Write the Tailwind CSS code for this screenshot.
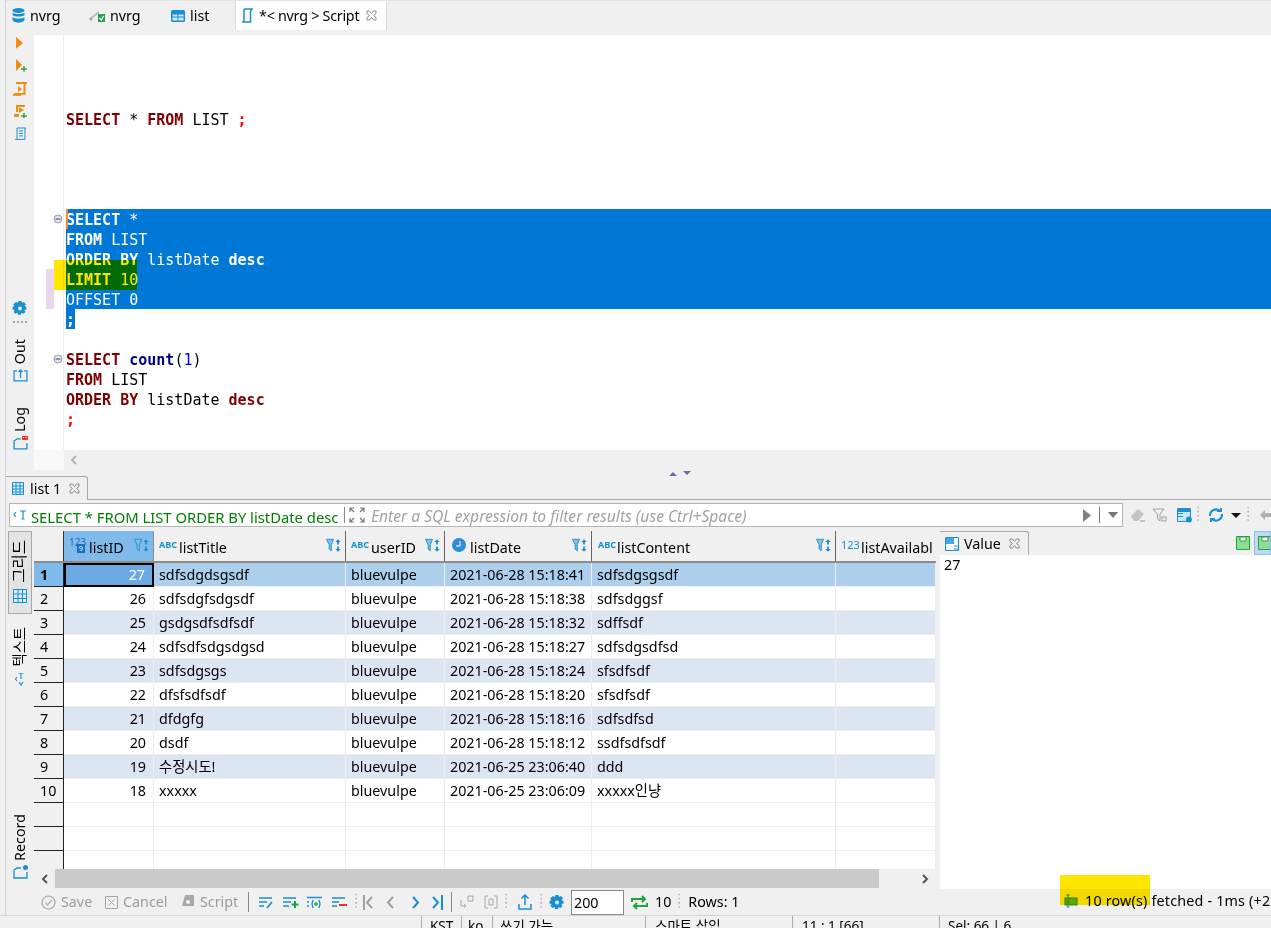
<!DOCTYPE html>
<html lang="ko">
<head>
<meta charset="UTF-8" />
<title>nvrg Script</title>
<script src="https://cdn.jsdelivr.net/npm/@tailwindcss/browser@4"></script>
</head>
<body class="m-0 overflow-hidden bg-[#f0f0f0]">

<svg class="hidden">
  <symbol id="sortf" viewBox="0 0 18 16">
    <path d="M.5 1h8L6 7v7L3.500 12V7z" fill="#7fc0e8" stroke="#1a8fd0" stroke-width="1"/>
    <path d="M13.500 1l3 3h-2v3h-2V4h-2zM13.500 15l3-3h-2V9h-2v3h-2z" fill="#1a8fd0"/>
  </symbol>
  <symbol id="dots" viewBox="0 0 3 24">
    <path d="M0 2h2v2H0zM0 7h2v2H0zM0 12h2v2H0zM0 17h2v2H0z" fill="#b5b0a5"/>
  </symbol>
</svg>

<div class="relative w-[1271px] h-[928px] overflow-hidden bg-[#f0f0f0] text-black font-['Noto_Sans','Noto_Sans_CJK_KR',sans-serif] text-[14.3px]">
  <div class="ml-[5px] border-l border-[#d4d4d4] h-[915px] flex flex-col">

    <!-- tabs -->
    <div class="h-[30px] flex items-stretch shrink-0 border-t border-[#e2e2e2]">
      <div class="w-[77px] flex items-center pl-[6px] gap-[5px]">
        <svg width="13" height="15" viewBox="0 0 13 15"><ellipse cx="6.500" cy="2.500" rx="6" ry="2.500" fill="#1a8fd0"/><path d="M.5 4.500c2 2 10 2 12 0v2.500c-2 2-10 2-12 0zM.5 9c2 2 10 2 12 0v3c-2 3.500-10 3.500-12 0z" fill="#1a8fd0"/></svg>
        <span>nvrg</span>
      </div>
      <div class="w-[75px] flex items-center pl-[6px] gap-[4px]">
        <svg width="17" height="16" viewBox="0 0 17 16"><path d="M1 11l9-7" stroke="#b8bcc8" stroke-width="2"/><circle cx="2" cy="11" r="1.500" fill="#9aa0b0"/><rect x="9" y="6" width="7" height="8" fill="#2aa050"/><path d="M10.500 10l2 2 2-4" stroke="#fff" fill="none" stroke-width="1.200"/></svg>
        <span>nvrg</span>
      </div>
      <div class="w-[77px] flex items-center pl-[13px] gap-[5px]">
        <svg width="14" height="12" viewBox="0 0 14 12"><rect width="14" height="12" rx="1.500" fill="#1a8fd0"/><path d="M1.500 4.500h5v2h-5zM7.500 4.500h5v2h-5zM1.500 7.500h5v3h-5zM7.500 7.500h5v3h-5z" fill="#cfe8f7"/></svg>
        <span>list</span>
      </div>
      <div class="w-[152px] bg-white border-x border-[#dcdcdc] flex items-center pl-[5px] gap-[6px]">
        <svg width="12" height="16" viewBox="0 0 12 16" fill="none" stroke="#1a8fd0" stroke-width="1.500"><path d="M3 1h8L9.500 3v11H1"/><path d="M3 1v13"/></svg>
        <span class="tracking-[-0.25px]">*&lt; nvrg &gt; Script</span>
        <svg class="ml-[1px]" width="11" height="11" viewBox="0 0 11 11" fill="none" stroke="#8a8a8a"><path d="M1 1h2.500L5.500 3.500 7.500 1H10v2.500L7.500 5.500 10 7.500V10H7.500L5.500 7.500 3.500 10H1V7.500L3.500 5.500 1 3.500z"/></svg>
      </div>
    </div>
    <div class="h-[5px] shrink-0"></div>

    <!-- editor -->
    <div class="h-[415px] flex shrink-0">
      <div class="w-[28px] shrink-0 flex flex-col items-center">
        <svg class="mt-[1px]" width="10" height="14" viewBox="0 0 10 14"><path d="M1 1l7 6-7 6z" fill="#f08a12"/></svg>
        <svg class="mt-[9px] ml-[3px]" width="13" height="14" viewBox="0 0 13 14"><path d="M1 0l6 6-6 6z" fill="#f08a12"/><path d="M9 7v6M6 10h6" stroke="#3aa040" stroke-width="1.500"/></svg>
        <svg class="mt-[9px]" width="14" height="14" viewBox="0 0 14 14"><path d="M3 1h10L11.500 3v9H1" fill="none" stroke="#f08a12" stroke-width="2"/><path d="M5 4l4 3-4 3z" fill="#f08a12"/><path d="M0 12h8v2H0z" fill="#f08a12"/></svg>
        <svg class="mt-[9px] ml-[1px]" width="14" height="14" viewBox="0 0 14 14"><path d="M3 7V1h8" fill="none" stroke="#f08a12" stroke-width="2"/><path d="M5 2l5 3-5 3z" fill="#f08a12"/><path d="M0 9h5v3H0z" fill="#f08a12"/><path d="M10 8v6M7 11h6" stroke="#3aa040" stroke-width="1.500"/></svg>
        <svg class="mt-[9px]" width="13" height="15" viewBox="0 0 13 15" fill="none" stroke="#1a8fd0"><path d="M3 1h9l-1 1v10.500H1"/><path d="M3 1v11.500M5 4h4M5 6.500h4M5 9h4"/></svg>
        <svg class="mt-[158px]" width="16" height="16" viewBox="0 0 16 16"><path d="M6.500 1h3l.5 2 2-1 2 2.500-1.500 1.500 2 1v2.500l-2 .5 1 2-2 2-2-1-.5 2h-3l-.5-2-2 1-2-2 1-2-2-.5V7l2-1-1.500-1.500L4 2l2 1z" fill="#1a8fd0"/><circle cx="8" cy="8.500" r="2" fill="#d8eefa"/></svg>
        <svg class="mt-[5px]" width="14" height="2" viewBox="0 0 14 2"><path d="M0 0h2v2H0zM4 0h2v2H4zM8 0h2v2H8zM12 0h2v2h-2z" fill="#a8a8a8"/></svg>
        <span class="mt-[16px] [writing-mode:vertical-rl] rotate-180 leading-none">Out</span>
        <svg class="mt-[5px]" width="15" height="13" viewBox="0 0 15 13" fill="none" stroke="#1a8fd0" stroke-width="1.300"><path d="M4 2H1v10h13V2h-3M7.500 9V1M5.500 3l2-2 2 2"/></svg>
        <span class="mt-[25px] [writing-mode:vertical-rl] rotate-180 leading-none">Log</span>
        <svg class="mt-[4px]" width="15" height="14" viewBox="0 0 15 14"><path d="M8 3H4L1 5v8h13V7" fill="none" stroke="#1a8fd0" stroke-width="1.300"/><rect x="9" y="0" width="6" height="4" fill="#e8352b"/><path d="M10 1.500h1M12.500 1.500h1" stroke="#fff"/></svg>
      </div>
      <div class="relative w-[30px] shrink-0 bg-white border-r border-[#eeeeee]">
        <svg class="absolute left-[19px] top-[179px]" width="10" height="10" viewBox="0 0 10 10"><circle cx="5" cy="5" r="4" fill="#dfe3ea" stroke="#9aa3b5"/><path d="M2.500 5h5" stroke="#445"/></svg>
        <svg class="absolute left-[19px] top-[319px]" width="10" height="10" viewBox="0 0 10 10"><circle cx="5" cy="5" r="4" fill="#dfe3ea" stroke="#9aa3b5"/><path d="M2.500 5h5" stroke="#445"/></svg>
      </div>
      <div class="flex-1 bg-white pt-[14px] font-['DejaVu_Sans_Mono',monospace] text-[15px] leading-[22px]">
        <div class="h-[60px]"></div>
        <div class="h-5 pl-[2px]"><b class="text-[#7f0000]">SELECT</b> * <b class="text-[#7f0000]">FROM</b> LIST <b class="text-[#ff0000]">;</b></div>
        <div class="h-[80px]"></div>
        <div class="ml-[2px] bg-[#0078d7] text-white relative">
          <span class="absolute left-0 top-0 w-[2px] h-5 bg-[#f08a30]"></span>
          <div class="h-5"><b>SELECT</b> *</div>
          <div class="h-5"><b>FROM</b> LIST</div>
          <div class="h-5"><b>ORDER BY</b> listDate <b>desc</b></div>
          <div class="h-5"><b>LIMIT</b> 10</div>
          <div class="h-5">OFFSET 0</div>
        </div>
        <div class="ml-[2px] w-[9px] h-5 bg-[#0078d7] text-white"><b>;</b></div>
        <div class="h-5"></div>
        <div class="h-5 pl-[2px]"><b class="text-[#7f0000]">SELECT</b> <b class="text-[#00007f]">count</b>(<span class="text-[#0000ff]">1</span>)</div>
        <div class="h-5 pl-[2px]"><b class="text-[#7f0000]">FROM</b> LIST</div>
        <div class="h-5 pl-[2px]"><b class="text-[#7f0000]">ORDER BY</b> listDate <b class="text-[#7f0000]">desc</b></div>
        <div class="h-5 pl-[2px]"><b class="text-[#ff0000]">;</b></div>
      </div>
    </div>

    <!-- editor scrollbar -->
    <div class="h-[20px] shrink-0 flex">
      <div class="w-[28px]"></div>
      <div class="w-[30px] bg-[#f8f8f8]"></div>
      <div class="flex-1 pl-[6px] flex items-center">
        <svg width="8" height="10" viewBox="0 0 8 10" fill="none" stroke="#b5b5b5" stroke-width="2"><path d="M6 1L2 5l4 4"/></svg>
      </div>
    </div>

    <!-- sash -->
    <div class="h-[6px] shrink-0 relative">
      <svg class="absolute left-[663px] top-0" width="23" height="6" viewBox="0 0 23 6"><path d="M0 6l4-4 4 4zM14 1h8l-4 4z" fill="#6a6aa8"/></svg>
    </div>

    <!-- result tabs -->
    <div class="h-[24px] shrink-0 border-b border-[#a8a8a8] flex">
      <div class="w-[82px] h-[24px] border-t border-r border-[#a8a8a8] rounded-tr-[3px] bg-[#f0f0f0] flex items-center pl-[6px] gap-[6px]">
        <svg width="12" height="13" viewBox="0 0 12 13"><path d="M.5.500h11v12H.5zM.5 4h11M.5 7h11M.5 10h11M4 .5v12M8 .5v12" fill="#d5ecf9" stroke="#1a8fd0"/></svg>
        <span>list 1</span>
        <svg class="ml-[2px]" width="11" height="11" viewBox="0 0 11 11" fill="none" stroke="#8a8a8a"><path d="M1 1h2.500L5.500 3.500 7.500 1H10v2.500L7.500 5.500 10 7.500V10H7.500L5.500 7.500 3.500 10H1V7.500L3.500 5.500 1 3.500z"/></svg>
      </div>
    </div>

    <!-- filter row -->
    <div class="h-[24px] mt-[3px] shrink-0 flex items-center">
      <div class="ml-[3px] w-[1118px] h-[24px] bg-white border border-[#b5b5b5] flex items-center">
        <svg class="ml-[3px] shrink-0" width="14" height="10" viewBox="0 0 14 10" fill="none" stroke="#1a8fd0" stroke-width="1.200"><path d="M3 2L1 4.500 3 7M7 1h6M10 1v8M8.500 9h3"/></svg>
        <span class="ml-[4px] mt-[4px] text-[14.8px] text-[#008000] whitespace-nowrap w-[313px] shrink-0 overflow-hidden">SELECT * FROM LIST ORDER BY listDate desc</span>
        <span class="w-px h-[16px] bg-[#8a8a8a] shrink-0"></span>
        <svg class="ml-[4px] shrink-0" width="16" height="16" viewBox="0 0 16 16" fill="none" stroke="#777" stroke-width="1.200"><path d="M1 5V1h4M1 1l4 4M11 1h4v4M15 1l-4 4M1 11v4h4M1 15l4-4M15 11v4h-4M15 15l-4-4"/></svg>
        <span class="ml-[6px] mt-[4px] text-[15.6px] italic text-[#a3a3a3] whitespace-nowrap">Enter a SQL expression to filter results (use Ctrl+Space)</span>
        <div class="ml-auto flex items-center">
          <svg width="10" height="13" viewBox="0 0 10 13"><path d="M1 0l8 6.500-8 6.500z" fill="#808080"/></svg>
          <span class="ml-[7px] w-px h-[16px] bg-[#777]"></span>
          <svg class="ml-[8px] mr-[4px]" width="10" height="6" viewBox="0 0 10 6"><path d="M0 0h10L5 6z" fill="#777"/></svg>
        </div>
      </div>
      <svg class="ml-[7px]" width="16" height="14" viewBox="0 0 16 14"><path d="M1 8l7-7 6 5-6 7H4z" fill="#c4c4c4"/><path d="M10 13h5" stroke="#999"/></svg>
      <svg class="ml-[6px]" width="16" height="15" viewBox="0 0 16 15" fill="none" stroke="#a0a0a0"><path d="M1 1h11L8 6v7L5.500 11V6z"/><rect x="10" y="9" width="4" height="4"/></svg>
      <svg class="ml-[9px]" width="16" height="15" viewBox="0 0 16 15"><path d="M.5.500h13v13H.5z" fill="#cfe6f5" stroke="#1a8fd0"/><path d="M.5 1h13v3H.5zM1 5h5v1H1zM1 8h5v1H1z" fill="#1a8fd0"/><circle cx="12" cy="11.500" r="3" fill="#1a8fd0"/></svg>
      <svg class="ml-[4px]" width="3" height="20" viewBox="0 0 3 24"><use href="#dots"/></svg>
      <svg class="ml-[8px]" width="16" height="16" viewBox="0 0 16 16" fill="none" stroke="#1a8fd0" stroke-width="2"><path d="M2 9a6 6 0 0 1 10-5M14 7a6 6 0 0 1-10 5M9 4h4V1M7 12H3v3"/></svg>
      <svg class="ml-[7px]" width="10" height="5" viewBox="0 0 10 5"><path d="M0 0h10L5 5z" fill="#111"/></svg>
      <svg class="ml-[6px]" width="3" height="20" viewBox="0 0 3 24"><use href="#dots"/></svg>
      <svg class="ml-[9px]" width="12" height="12" viewBox="0 0 12 12"><path d="M6 1L1 6l5 5V8h6V4H6z" fill="#b0b0b0"/></svg>
    </div>

    <!-- results -->
    <div class="h-[358px] mt-[4px] shrink-0 flex">
      <div class="w-[28px] shrink-0 pl-[2px] flex flex-col">
        <div class="w-6 h-[83px] bg-[#e3e3e3] border border-[#a8a8a8] flex flex-col items-center pt-[8px]">
          <span class="[writing-mode:vertical-rl] [text-orientation:sideways] rotate-180 leading-none text-[15.5px]">그리드</span>
          <svg class="mt-[6px]" width="14" height="14" viewBox="0 0 14 14"><path d="M.5.500h13v13H.5zM.5 5h13M.5 9.500h13M5 .5v13M9.500.5v13" fill="#d5ecf9" stroke="#1a8fd0"/></svg>
        </div>
        <div class="w-6 mt-[13px] flex flex-col items-center">
          <span class="[writing-mode:vertical-rl] [text-orientation:sideways] rotate-180 leading-none">텍스트</span>
          <svg class="mt-[7px]" width="10" height="13" viewBox="0 0 10 13" fill="none" stroke="#1a8fd0" stroke-width="1.200"><path d="M3 0h6M6 0v6M2 4L.5 6 2 8M4 9l2 3 2-3"/></svg>
        </div>
        <div class="w-6 mt-auto mb-[10px] flex flex-col items-center">
          <span class="[writing-mode:vertical-rl] rotate-180 leading-none">Record</span>
          <svg class="mt-[4px]" width="15" height="14" viewBox="0 0 15 14"><path d="M8 3H4L1 5v8h13V7" fill="none" stroke="#1a8fd0" stroke-width="1.300"/><circle cx="12.500" cy="2.500" r="2.500" fill="#1a8fd0"/></svg>
        </div>
      </div>

      <div class="w-[902px] shrink-0 flex flex-col">
        <div class="h-[338px] overflow-hidden bg-white" id="grid">
          <div class="h-[32px] grid grid-cols-[30px_90px_192px_99px_147px_244px_100px] bg-[#f0f0f0] border-b-2 border-[#8c8c8c]">
            <div class="border-r border-[#333]"></div>
            <div class="bg-[#80baeb] border-r border-[#8c8c8c] flex items-center pl-[5px]">
              <span class="relative w-[20px] h-[16px] text-[#1a70c0] text-[10px] leading-[10px] -mt-[3px] shrink-0">123<i class="absolute left-[8px] top-[7px] w-[8px] h-[9px] bg-[#1a70c0] text-white text-[7px] not-italic leading-[9px] text-center">9</i></span>
              <span class="mt-[4px]">listID</span>
              <svg class="ml-auto mr-[3px] -mt-[2px]" width="16" height="15"><use href="#sortf"/></svg>
            </div>
            <div class="border-r border-[#666] flex items-center pl-[5px]">
              <span class="w-[20px] text-[#1a8fd0] text-[9px] font-bold leading-none -mt-[4px] shrink-0">ABC</span>
              <span class="mt-[4px]">listTitle</span>
              <svg class="ml-auto mr-[3px] -mt-[2px]" width="16" height="15"><use href="#sortf"/></svg>
            </div>
            <div class="border-r border-[#666] flex items-center pl-[5px]">
              <span class="w-[20px] text-[#1a8fd0] text-[9px] font-bold leading-none -mt-[4px] shrink-0">ABC</span>
              <span class="mt-[4px]">userID</span>
              <svg class="ml-auto mr-[3px] -mt-[2px]" width="16" height="15"><use href="#sortf"/></svg>
            </div>
            <div class="border-r border-[#666] flex items-center pl-[7px]">
              <svg class="-mt-[3px] shrink-0" width="14" height="14" viewBox="0 0 14 14"><circle cx="7" cy="7" r="7" fill="#2c8ed6"/><path d="M8 3v5H4" stroke="#fff" fill="none"/></svg>
              <span class="ml-[4px] mt-[4px]">listDate</span>
              <svg class="ml-auto mr-[3px] -mt-[2px]" width="16" height="15"><use href="#sortf"/></svg>
            </div>
            <div class="border-r border-[#666] flex items-center pl-[6px]">
              <span class="w-[19px] text-[#1a8fd0] text-[9px] font-bold leading-none -mt-[4px] shrink-0">ABC</span>
              <span class="mt-[4px]">listContent</span>
              <svg class="ml-auto mr-[3px] -mt-[2px]" width="16" height="15"><use href="#sortf"/></svg>
            </div>
            <div class="flex items-center pl-[5px] overflow-hidden whitespace-nowrap">
              <span class="w-[20px] text-[#1a8fd0] text-[11px] leading-none -mt-[4px] shrink-0">123</span>
              <span class="mt-[4px]">listAvailabl</span>
            </div>
          </div>
          <div id="rows"></div>
        </div>
        <div class="h-[19px] flex items-center bg-[#f0f0f0]">
          <div class="w-[21px] flex justify-center"><svg width="8" height="10" viewBox="0 0 8 10" fill="none" stroke="#555" stroke-width="2"><path d="M6 1L2 5l4 4"/></svg></div>
          <div class="w-[824px] h-[19px] bg-[#cacaca]"></div>
          <div class="w-[57px] pl-[42px]"><svg width="8" height="10" viewBox="0 0 8 10" fill="none" stroke="#555" stroke-width="2"><path d="M2 1l4 4-4 4"/></svg></div>
        </div>
      </div>

      <div class="ml-[4px] flex-1 flex flex-col">
        <div class="h-[24px] flex items-stretch">
          <div class="w-[89px] border-t border-r border-[#a8a8a8] rounded-tr-[3px] flex items-center pl-[5px] gap-[5px]">
            <svg width="14" height="14" viewBox="0 0 14 14"><path d="M.5.500h13v13H.5z" fill="#fff" stroke="#1a8fd0"/><path d="M1 1h8v6H1z" fill="#3fa9e0"/><path d="M9 9h4M9 12h4" stroke="#1a8fd0"/></svg>
            <span>Value</span>
            <svg class="ml-[3px]" width="11" height="11" viewBox="0 0 11 11" fill="none" stroke="#8a8a8a"><path d="M1 1h2.500L5.500 3.500 7.500 1H10v2.500L7.500 5.500 10 7.500V10H7.500L5.500 7.500 3.500 10H1V7.500L3.500 5.500 1 3.500z"/></svg>
          </div>
          <div class="ml-auto flex items-center">
            <svg width="14" height="14" viewBox="0 0 14 14"><path d="M.5.500h13v13H.5z" fill="#8fdc9a" stroke="#1aa83a"/><path d="M4 1h6v4H4z" fill="#fff" stroke="#1aa83a"/></svg>
            <div class="ml-[4px] w-[17px] h-[24px] bg-[#bcdcf5] border border-[#8fc0ea] pl-[3px] pt-[4px] overflow-hidden">
              <svg width="14" height="14" viewBox="0 0 14 14"><path d="M.5.500h13v13H.5z" fill="#8fdc9a" stroke="#3a9a40"/><path d="M4 1h6v4H4z" fill="#fff" stroke="#3a9a40"/></svg>
            </div>
          </div>
        </div>
        <div class="h-[334px] bg-white pl-[4px] leading-[20px]">27</div>
      </div>
    </div>

    <!-- toolbar -->
    <div class="h-[26px] shrink-0 flex items-center text-[#9c9c9c]">
      <svg class="ml-[35px]" width="15" height="15" viewBox="0 0 15 15" fill="none" stroke="#a8a8a8" stroke-width="1.200"><circle cx="7.500" cy="7.500" r="6.500"/><path d="M4.500 7.500l2 2.500 4-5"/></svg>
      <span class="ml-[5px] w-[42px]">Save</span>
      <svg class="ml-[2px]" width="13" height="13" viewBox="0 0 13 13" fill="none" stroke="#a8a8a8"><path d="M.5.500h12v12H.5zM3.500 3.500l6 6M9.500 3.500l-6 6"/></svg>
      <span class="ml-[5px] w-[52px]">Cancel</span>
      <svg class="ml-[7px]" width="12" height="14" viewBox="0 0 12 14"><path d="M3 0h9v11H0z" fill="#a8a8a8"/><circle cx="6" cy="7" r="2" fill="#f0f0f0"/></svg>
      <span class="ml-[6px] w-[39px]">Script</span>
      <span class="ml-[9px] w-px h-[20px] bg-[#888]"></span>
      <svg class="ml-[10px]" width="15" height="13" viewBox="0 0 15 13" fill="none" stroke="#1a8fd0" stroke-width="1.700"><path d="M0 2h13M0 6h8M0 10h5M13 6l-5 6"/></svg>
      <svg class="ml-[9px]" width="16" height="13" viewBox="0 0 16 13" stroke-width="1.700" fill="none"><path d="M0 2h13M0 6h8M0 10h6" stroke="#1a8fd0"/><path d="M12 5v7M8.500 8.500h7" stroke="#1aa83a" stroke-width="2"/></svg>
      <svg class="ml-[8px]" width="15" height="13" viewBox="0 0 15 13" fill="none" stroke="#1a8fd0" stroke-width="1.300"><path d="M0 1.500h15M2 6H0M2 10H0M6 4L5 8l1 4M12 4l1 4-1 4"/><path d="M9 6v4M7 8h4" stroke="#1aa83a"/></svg>
      <svg class="ml-[10px]" width="15" height="13" viewBox="0 0 15 13" stroke-width="1.700" fill="none"><path d="M0 2h13M0 6h7M0 10h5" stroke="#1a8fd0"/><path d="M7 9h8" stroke="#e8352b" stroke-width="2"/></svg>
      <svg class="ml-[8px]" width="3" height="20" viewBox="0 0 3 24"><use href="#dots"/></svg>
      <svg class="ml-[4px]" width="12" height="15" viewBox="0 0 12 15" fill="none" stroke="#a0a0a0" stroke-width="2"><path d="M2 0v15M10 2L5 7.500l5 5.500"/></svg>
      <svg class="ml-[12px]" width="8" height="15" viewBox="0 0 8 15" fill="none" stroke="#a0a0a0" stroke-width="2"><path d="M7 2L2 7.500 7 13"/></svg>
      <svg class="ml-[18px]" width="8" height="15" viewBox="0 0 8 15" fill="none" stroke="#1a8fd0" stroke-width="2"><path d="M1 2l5 5.500L1 13"/></svg>
      <svg class="ml-[11px]" width="13" height="15" viewBox="0 0 13 15" fill="none" stroke="#1a8fd0" stroke-width="2"><path d="M11 0v15M2 2l5 5.500L2 13"/></svg>
      <span class="ml-[7px] w-px h-[20px] bg-[#888]"></span>
      <svg class="ml-[8px]" width="14" height="14" viewBox="0 0 14 14" fill="none" stroke="#a8a8a8"><path d="M1 5v6h5M4 9l2 2-2 2M8 1h5v5H8z"/></svg>
      <svg class="ml-[10px]" width="14" height="14" viewBox="0 0 14 14" fill="none" stroke="#a8a8a8"><path d="M4 1H1v12h3M10 1h3v12h-3M5 4h4v6H5z"/></svg>
      <svg class="ml-[7px]" width="3" height="20" viewBox="0 0 3 24"><use href="#dots"/></svg>
      <svg class="ml-[10px]" width="14" height="16" viewBox="0 0 14 16" fill="none" stroke="#1a8fd0" stroke-width="1.500"><path d="M7 11V1M3.500 4.500L7 1l3.500 3.500M1 10v5h12v-5"/></svg>
      <svg class="ml-[8px]" width="3" height="20" viewBox="0 0 3 24"><use href="#dots"/></svg>
      <svg class="ml-[6px]" width="16" height="16" viewBox="0 0 16 16"><path d="M6.500 1h3l.5 2 2-1 2 2.500-1.500 1.500 2 1v2.500l-2 .5 1 2-2 2-2-1-.5 2h-3l-.5-2-2 1-2-2 1-2-2-.5V7l2-1-1.500-1.500L4 2l2 1z" fill="#1a8fd0"/><circle cx="8" cy="8.500" r="2" fill="#d8eefa"/></svg>
      <div class="ml-[6px] w-[53px] h-[25px] bg-white border border-[#8a8a8a] text-black pl-[2px] leading-[24px]">200</div>
      <svg class="ml-[7px]" width="17" height="15" viewBox="0 0 17 15" fill="none" stroke="#1aa83a" stroke-width="2"><path d="M1 7V4h12M11 1l3 3-3 3M16 8v3H4M6 14l-3-3 3-3"/></svg>
      <span class="ml-[7px] text-black">10</span>
      <svg class="ml-[7px]" width="3" height="20" viewBox="0 0 3 24"><use href="#dots"/></svg>
      <span class="ml-[7px] text-black">Rows: 1</span>
      <div class="ml-auto flex items-center text-black whitespace-nowrap w-[207px] overflow-hidden -mt-[3px]">
        <svg width="14" height="14" viewBox="0 0 14 14" class="shrink-0"><rect x="1" y="4" width="12" height="7" fill="#5cb82a" stroke="#3a8a20"/><path d="M4 1v12M2.500 1h3M2.500 13h3" stroke="#1a8fd0"/></svg>
        <span class="ml-[7px] tracking-[0.2px]">10 row(s) fetched - 1ms (+2</span>
      </div>
    </div>
  </div>

  <!-- status bar -->
  <div class="border-t border-[#d4d4d4] h-[13px] flex text-[13.5px] whitespace-nowrap overflow-hidden pl-[421px]">
    <div class="w-[40px] pl-[8px] border-l border-[#aaa]">KST</div>
    <div class="w-[31px] pl-[6px] border-l border-[#aaa]">ko</div>
    <div class="w-[153px] pl-[7px] border-l border-[#aaa]">쓰기 가능</div>
    <div class="w-[147px] pl-[9px] border-l border-[#aaa]">스마트 삽입</div>
    <div class="w-[147px] pl-[9px] border-l border-[#aaa]">11 : 1 [66]</div>
    <div class="w-[96px] pl-[8px] border-l border-[#aaa]">Sel: 66 | 6</div>
  </div>

  <!-- highlighter strokes over the screenshot -->
  <div class="absolute left-[46px] top-[269px] w-[8px] h-[40px] bg-[#e8d8ea]"></div>
  <div class="absolute left-[54px] top-[260px] w-[83px] h-[30px] bg-[#ffe600] mix-blend-multiply"></div>
  <div class="absolute left-[1060px] top-[875px] w-[90px] h-[30px] bg-[#ffe600] mix-blend-multiply"></div>
</div>

<script>
  const filas = [
    [27, "sdfsdgdsgsdf", "2021-06-28 15:18:41", "sdfsdgsgsdf"],
    [26, "sdfsdgfsdgsdf", "2021-06-28 15:18:38", "sdfsdggsf"],
    [25, "gsdgsdfsdfsdf", "2021-06-28 15:18:32", "sdffsdf"],
    [24, "sdfsdfsdgsdgsd", "2021-06-28 15:18:27", "sdfsdgsdfsd"],
    [23, "sdfsdgsgs", "2021-06-28 15:18:24", "sfsdfsdf"],
    [22, "dfsfsdfsdf", "2021-06-28 15:18:20", "sfsdfsdf"],
    [21, "dfdgfg", "2021-06-28 15:18:16", "sdfsdfsd"],
    [20, "dsdf", "2021-06-28 15:18:12", "ssdfsdfsdf"],
    [19, "수정시도!", "2021-06-25 23:06:40", "ddd"],
    [18, "xxxxx", "2021-06-25 23:06:09", "xxxxx인냥"],
    ["", "", "", ""], ["", "", "", ""], ["", "", "", ""]
  ];

  document.getElementById("rows").innerHTML = filas.map((f, i) => {
    const n = f[0] === "" ? "" : i + 1;
    let fondo = "bg-white";
    if (i === 0) fondo = "bg-[#aecfec]";
    else if (n && i % 2 === 0) fondo = "bg-[#dce6f2]";
    const celda = "px-[5px] border-r border-b border-[#eeeeee] overflow-hidden whitespace-nowrap";
    return `
      <div class="h-6 leading-[23px] grid grid-cols-[30px_90px_192px_99px_147px_244px_100px] ${fondo}">
        <div class="pl-[6px] border-r border-b border-[#222] ${i === 0 ? "bg-[#7fbaec] font-bold" : "bg-[#f0f0f0]"}">${n}</div>
        <div class="pr-[7px] text-right ${i === 0 ? "bg-[#6aa9e2] text-white border-2 border-black leading-[20px]" : "border-r border-b border-[#eeeeee]"}">${f[0]}</div>
        <div class="${celda}">${f[1]}</div>
        <div class="${celda}">${n ? "bluevulpe" : ""}</div>
        <div class="${celda}">${f[2]}</div>
        <div class="${celda}">${f[3]}</div>
        <div class="${celda}"></div>
      </div>`;
  }).join("");
</script>

</body>
</html>
